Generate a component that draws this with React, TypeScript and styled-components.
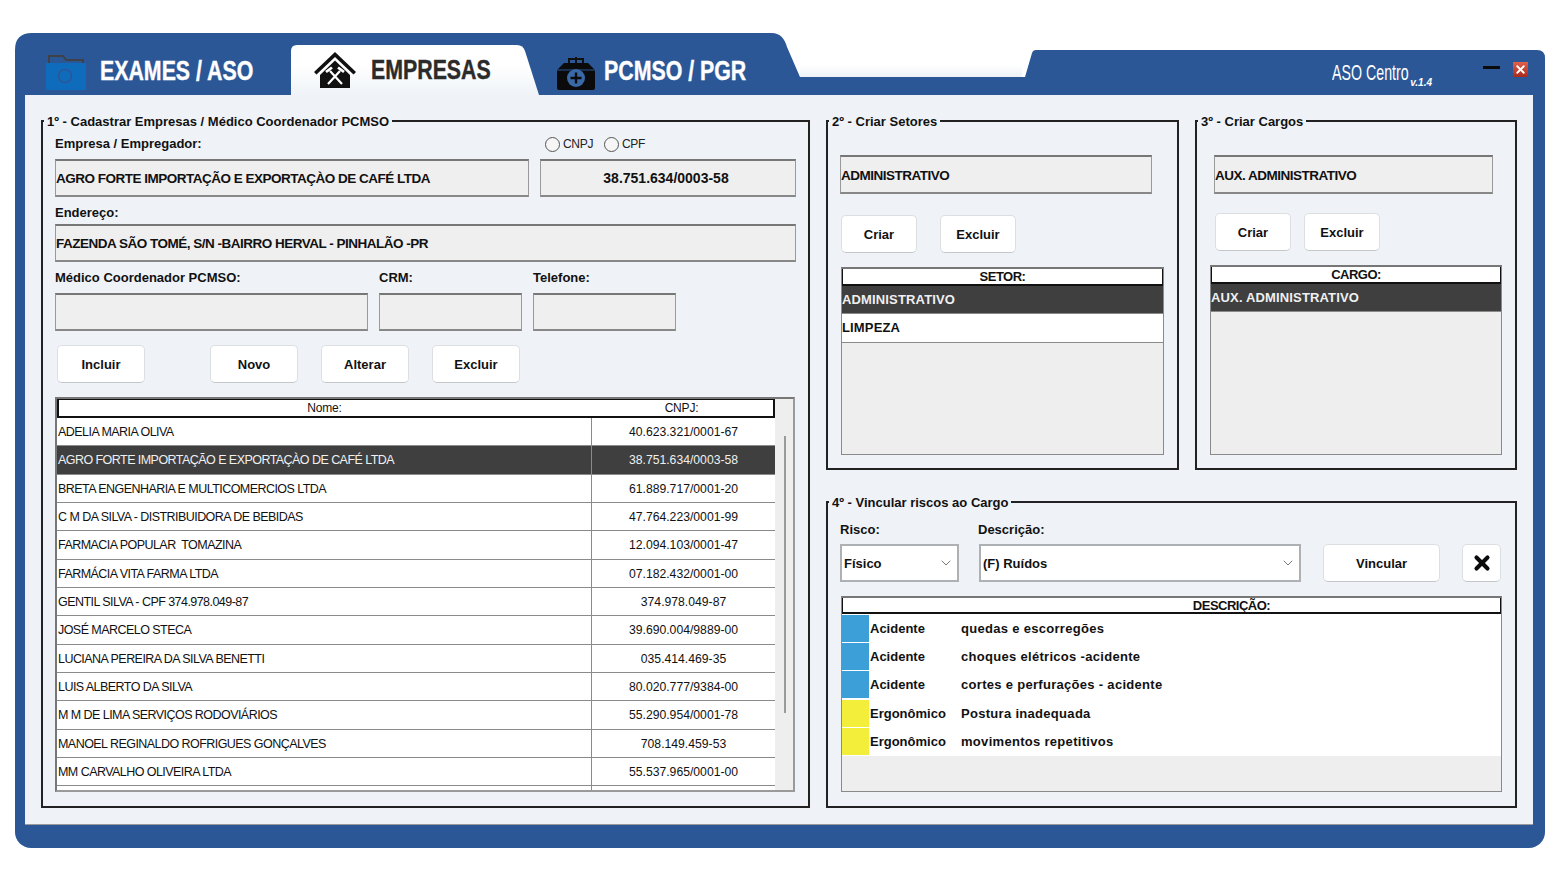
import styled, { createGlobalStyle } from 'styled-components';
import { ChevronDown, X } from 'lucide-react';

const EMPRESAS = [
  ['ADELIA MARIA OLIVA', '40.623.321/0001-67'],
  ['AGRO FORTE IMPORTAÇÃO E EXPORTAÇÀO DE CAFÉ LTDA', '38.751.634/0003-58'],
  ['BRETA ENGENHARIA E MULTICOMERCIOS LTDA', '61.889.717/0001-20'],
  ['C M DA SILVA - DISTRIBUIDORA DE BEBIDAS', '47.764.223/0001-99'],
  ['FARMACIA POPULAR  TOMAZINA', '12.094.103/0001-47'],
  ['FARMÁCIA VITA FARMA LTDA', '07.182.432/0001-00'],
  ['GENTIL SILVA - CPF 374.978.049-87', '374.978.049-87'],
  ['JOSÉ MARCELO STECA', '39.690.004/9889-00'],
  ['LUCIANA PEREIRA DA SILVA BENETTI', '035.414.469-35'],
  ['LUIS ALBERTO DA SILVA', '80.020.777/9384-00'],
  ['M M DE LIMA SERVIÇOS RODOVIÁRIOS', '55.290.954/0001-78'],
  ['MANOEL REGINALDO ROFRIGUES GONÇALVES', '708.149.459-53'],
  ['MM CARVALHO OLIVEIRA LTDA', '55.537.965/0001-00'],
  ['', ''],
];

const RISCOS = [
  ['#3d9fd8', 'Acidente', 'quedas e escorregões'],
  ['#3d9fd8', 'Acidente', 'choques elétricos -acidente'],
  ['#3d9fd8', 'Acidente', 'cortes e perfurações - acidente'],
  ['#f2ee3a', 'Ergonômico', 'Postura inadequada'],
  ['#f2ee3a', 'Ergonômico', 'movimentos repetitivos'],
];

function FolderIcon() {
  return (
    <svg width="40" height="36" viewBox="0 0 40 36">
      <path d="M3 9V2h14l3 4h17v3" fill="none" stroke="#3f4149" strokeWidth="2" />
      <rect x="0" y="9" width="40" height="27" rx="1" fill="#0f6cbd" />
      <circle cx="19" cy="22" r="6.5" fill="none" stroke="#2b5797" strokeWidth="1.6" />
    </svg>
  );
}

function HouseIcon() {
  return (
    <svg width="42" height="36" viewBox="0 0 42 36">
      <path d="M21 0L42 20l-2.500 2.500L21 5 2.500 22.500 0 20z" fill="#111" />
      <path d="M6 23L21 8.500 36 23v13H6z" fill="#111" />
      <path d="M14 32L26 19M28 32L16 19" stroke="#fff" strokeWidth="2.200" />
      <path d="M12 20L18 15.500M30 20L24 15.500" stroke="#fff" strokeWidth="2.800" />
    </svg>
  );
}

function CaseIcon() {
  return (
    <svg width="38" height="33" viewBox="0 0 38 33">
      <path d="M12 7V2h14v5" fill="none" stroke="#111" strokeWidth="2" />
      <path d="M19 0v7" stroke="#111" strokeWidth="2" />
      <path d="M7 6h24l7 7v18a2 2 0 0 1-2 2H2a2 2 0 0 1-2-2V13z" fill="#0b0b0b" />
      <path d="M0 13h38" stroke="#2b5797" strokeWidth="1" />
      <circle cx="19" cy="21" r="9" fill="#3a69a8" />
      <path d="M19 15.500v11M13.500 21h11" stroke="#0b0b0b" strokeWidth="2.400" />
    </svg>
  );
}

export default function App() {
  return (
    <>
      <GlobalStyle />
      <Window>
        <Header>
          <TabsBar>
            <TabIdle $width={245} $gap={14}>
              <FolderIcon />
              <TabLabel>EXAMES / ASO</TabLabel>
            </TabIdle>
            <TabActive>
              <HouseIcon />
              <TabLabel>EMPRESAS</TabLabel>
            </TabActive>
            <TabIdle $width={220} $gap={9}>
              <CaseIcon />
              <TabLabel>PCMSO / PGR</TabLabel>
            </TabIdle>
          </TabsBar>
          <Notch />
          <TitleBar>
            <AppTitle>ASO Centro</AppTitle>
            <AppVersion>v.1.4</AppVersion>
            <MinimizeButton />
            <CloseButton>
              <X size={13} strokeWidth={3.5} color="#fff" />
            </CloseButton>
          </TitleBar>
        </Header>

        <Frame>
          <Content>
            <Group>
              <legend>1º - Cadastrar Empresas / Médico Coordenador PCMSO</legend>
              <EmpresaForm>
                <TwoColumns>
                  <Label>Empresa / Empregador:</Label>
                  <RadioRow>
                    <Radio />
                    <RadioText>CNPJ</RadioText>
                    <Radio />
                    <RadioText>CPF</RadioText>
                  </RadioRow>
                </TwoColumns>
                <TwoColumns $top={7}>
                  <Field>AGRO FORTE IMPORTAÇÃO E EXPORTAÇÀO DE CAFÉ LTDA</Field>
                  <Field $center>38.751.634/0003-58</Field>
                </TwoColumns>
                <Label $top={8}>Endereço:</Label>
                <Field $top={3}>FAZENDA SÃO TOMÉ, S/N -BAIRRO HERVAL - PINHALÃO -PR</Field>
                <ThreeColumns $top={8}>
                  <Label>Médico Coordenador PCMSO:</Label>
                  <Label>CRM:</Label>
                  <Label>Telefone:</Label>
                </ThreeColumns>
                <ThreeColumns $top={7}>
                  <Field />
                  <Field />
                  <Field />
                </ThreeColumns>
                <FormButtons>
                  <IncluirButton>Incluir</IncluirButton>
                  <Button>Novo</Button>
                  <Button>Alterar</Button>
                  <Button>Excluir</Button>
                </FormButtons>
                <CompanyList>
                  <CompanyTable>
                    <CompanyHead>
                      <span>Nome:</span>
                      <span>CNPJ:</span>
                    </CompanyHead>
                    {EMPRESAS.map(([nome, cnpj], i) => (
                      <CompanyRow key={i} $selected={i === 1}>
                        <NameCell>{nome}</NameCell>
                        <CnpjCell>{cnpj}</CnpjCell>
                      </CompanyRow>
                    ))}
                  </CompanyTable>
                  <ScrollTrack>
                    <ScrollThumb />
                  </ScrollTrack>
                </CompanyList>
              </EmpresaForm>
            </Group>

            <RightColumn>
              <TopGroups>
                <Group>
                  <legend>2º - Criar Setores</legend>
                  <SetorPane>
                    <Field $width={312}>ADMINISTRATIVO</Field>
                    <SmallButtons $top={21} $left={1} $gap={23}>
                      <SmallButton>Criar</SmallButton>
                      <SmallButton>Excluir</SmallButton>
                    </SmallButtons>
                    <SmallList $width={323} $height={188} $left={1}>
                      <SmallListHead>SETOR:</SmallListHead>
                      <SmallRow $selected>ADMINISTRATIVO</SmallRow>
                      <SmallRow>LIMPEZA</SmallRow>
                    </SmallList>
                  </SetorPane>
                </Group>
                <Group>
                  <legend>3º - Criar Cargos</legend>
                  <CargoPane>
                    <Field $width={279} $left={4}>AUX. ADMINISTRATIVO</Field>
                    <SmallButtons $top={19} $left={5} $gap={13}>
                      <SmallButton>Criar</SmallButton>
                      <SmallButton>Excluir</SmallButton>
                    </SmallButtons>
                    <SmallList $width={292} $height={190}>
                      <SmallListHead>CARGO:</SmallListHead>
                      <SmallRow $selected>AUX. ADMINISTRATIVO</SmallRow>
                    </SmallList>
                  </CargoPane>
                </Group>
              </TopGroups>

              <RiscoGroup>
                <legend>4º - Vincular riscos ao Cargo</legend>
                <RiscoPane>
                  <RiscoLabels>
                    <Label>Risco:</Label>
                    <Label>Descrição:</Label>
                  </RiscoLabels>
                  <RiscoControls>
                    <Select>
                      Físico
                      <ChevronDown size={16} strokeWidth={1.2} color="#555" />
                    </Select>
                    <Select>
                      (F) Ruídos
                      <ChevronDown size={16} strokeWidth={1.2} color="#555" />
                    </Select>
                    <VincularButton>Vincular</VincularButton>
                    <RemoveButton>
                      <X size={22} strokeWidth={4.5} color="#0b0b0b" />
                    </RemoveButton>
                  </RiscoControls>
                  <SmallList $width={661} $height={196} $left={1} $top={14}>
                    <SmallListHead $offset={120}>DESCRIÇÃO:</SmallListHead>
                    {RISCOS.map(([cor, tipo, texto]) => (
                      <RiscoRow key={texto}>
                        <Swatch $color={cor} />
                        <RiscoTipo>{tipo}</RiscoTipo>
                        <RiscoTexto>{texto}</RiscoTexto>
                      </RiscoRow>
                    ))}
                  </SmallList>
                </RiscoPane>
              </RiscoGroup>
            </RightColumn>
          </Content>
        </Frame>
      </Window>
    </>
  );
}

const GlobalStyle = createGlobalStyle`
  html, body {
    margin: 0;
    background: #fff;
  }
  * {
    box-sizing: border-box;
  }
  body {
    font-family: "Liberation Sans", Arial, sans-serif;
    color: #111;
    overflow: hidden;
  }
`;

const Window = styled.div`
  width: 1530px;
  margin: 33px 0 0 15px;
`;

const Header = styled.header`
  height: 62px;
  display: flex;
  align-items: flex-end;
`;

const TabsBar = styled.nav`
  width: 785px;
  height: 62px;
  padding-left: 31px;
  display: flex;
  align-items: flex-end;
  background: #2b5797;
  clip-path: path('M0 62 L0 17 Q0 0 17 0 L757 0 Q768 0 772 14 L785 44 L785 62 Z');
`;

const TabLabel = styled.span`
  font-size: 27px;
  font-weight: 700;
  white-space: nowrap;
  -webkit-text-stroke: 0.4px currentColor;
  transform: scaleX(0.79);
  transform-origin: left center;
`;

const TabIdle = styled.div<{ $width: number; $gap: number }>`
  width: ${(p) => p.$width}px;
  height: 50px;
  padding-bottom: 5px;
  display: flex;
  align-items: flex-end;
  gap: ${(p) => p.$gap}px;
  color: #fff;

  & > svg {
    flex: none;
  }
  & > span {
    align-self: center;
    margin-top: 8px;
  }
`;

const TabActive = styled.div`
  width: 248px;
  height: 50px;
  margin-right: 18px;
  padding: 8px 0 7px 23px;
  display: flex;
  align-items: flex-end;
  gap: 15px;
  color: #2b2b2b;
  background: linear-gradient(#fff 40%, #eff3f7);
  clip-path: path('M0 50 L0 6 Q0 0 6 0 L226 0 Q232 0 234 6 L248 50 Z');

  & > span {
    align-self: center;
  }
`;

const Notch = styled.div`
  flex: 1;
  height: 30px;
  background: linear-gradient(#fff 0, #eef2f6 12px, #2b5797 12px);
`;

const TitleBar = styled.div`
  width: 523px;
  height: 45px;
  padding: 12px 17px 0 0;
  display: flex;
  align-items: flex-start;
  background: #2b5797;
  clip-path: path('M0 45 L0 27 L3 27 L10 3 Q11 0 14 0 L515 0 Q523 0 523 8 L523 45 Z');
`;

const AppTitle = styled.span`
  margin-left: auto;
  margin-top: -1px;
  font-size: 22px;
  line-height: 24px;
  color: #fff;
  white-space: nowrap;
  transform: scaleX(0.645);
  transform-origin: right center;
`;

const AppVersion = styled.span`
  margin: 15px 51px 0 2px;
  font-size: 10px;
  line-height: 11px;
  font-weight: 700;
  font-style: italic;
  color: #fff;
`;

const MinimizeButton = styled.div`
  width: 17px;
  height: 3px;
  margin-top: 4px;
  background: #0b0b0b;
`;

const CloseButton = styled.div`
  width: 15px;
  height: 15px;
  margin-left: 13px;
  display: flex;
  align-items: center;
  justify-content: center;
  background: linear-gradient(#e2604a, #a82a1c);
`;

const Frame = styled.div`
  padding: 0 12px 23px 10px;
  background: #2b5797;
  border-radius: 0 0 16px 16px;
`;

const Content = styled.main`
  height: 730px;
  padding: 18px 16px 17px 16px;
  display: grid;
  grid-template-columns: 769px 691px;
  column-gap: 16px;
  background: #eff3f7;
  border-bottom: 1px solid #999;
`;

const Group = styled.fieldset`
  margin: 0;
  padding: 0;
  min-width: 0;
  border: 2px solid #222;

  & > legend {
    height: 16px;
    margin-left: 1px;
    padding: 0 3px;
    font-size: 13px;
    line-height: 18px;
    font-weight: 700;
    white-space: nowrap;
  }
`;

const RiscoGroup = styled(Group)`
  flex: 1;
`;

const EmpresaForm = styled.div`
  padding: 7px 12px 14px 12px;
  display: flex;
  flex-direction: column;
`;

const TwoColumns = styled.div<{ $top?: number }>`
  margin-top: ${(p) => p.$top ?? 0}px;
  display: grid;
  grid-template-columns: 474px 256px;
  column-gap: 11px;
`;

const ThreeColumns = styled.div<{ $top?: number }>`
  margin-top: ${(p) => p.$top ?? 0}px;
  display: grid;
  grid-template-columns: 313px 143px 143px;
  column-gap: 11px;
`;

const Label = styled.label<{ $top?: number }>`
  height: 16px;
  margin-top: ${(p) => p.$top ?? 0}px;
  font-size: 13px;
  line-height: 16px;
  font-weight: 700;
`;

const RadioRow = styled.div`
  padding-left: 5px;
  display: flex;
  align-items: center;
`;

const Radio = styled.span`
  width: 15px;
  height: 15px;
  margin-right: 3px;
  border: 1px solid #555;
  border-radius: 50%;
  background: #f6f6f6;
`;

const RadioText = styled.span`
  width: 41px;
  font-size: 12px;
  letter-spacing: -0.3px;
  color: #222;
`;

const Field = styled.div<{ $center?: boolean; $top?: number; $left?: number; $width?: number }>`
  width: ${(p) => (p.$width ? `${p.$width}px` : 'auto')};
  height: ${(p) => (p.$width ? 39 : 38)}px;
  margin-top: ${(p) => p.$top ?? 0}px;
  margin-left: ${(p) => p.$left ?? 0}px;
  padding-top: ${(p) => (p.$width ? 2 : 0)}px;
  padding-right: ${(p) => (p.$center ? 4 : 0)}px;
  display: flex;
  align-items: center;
  justify-content: ${(p) => (p.$center ? 'center' : 'flex-start')};
  font-size: ${(p) => (p.$center ? 14 : 13.5)}px;
  font-weight: 700;
  letter-spacing: ${(p) => (p.$center ? 0 : -0.5)}px;
  white-space: nowrap;
  background: #efefef;
  border: 1px solid #999;
  border-top: 2px solid #777;
  border-bottom: 2px solid #888;
`;

const Button = styled.button`
  height: 38px;
  width: 88px;
  padding: 0;
  font-family: inherit;
  font-size: 13px;
  font-weight: 700;
  color: #111;
  background: #fff;
  border: 1px solid #dcdfe2;
  border-bottom-color: #c4c7ca;
  border-radius: 5px;
`;

const IncluirButton = styled(Button)`
  margin-right: 42px;
`;

const FormButtons = styled.div`
  margin: 14px 0 14px 2px;
  display: flex;
  gap: 23px;
`;

const CompanyList = styled.div`
  width: 740px;
  height: 395px;
  display: flex;
  overflow: hidden;
  background: #eeeeee;
  border: 2px solid #9a9a9a;
  border-left-color: #777;
  border-top-color: #777;
`;

const CompanyTable = styled.div`
  width: 718px;
  flex: none;
`;

const CompanyHead = styled.div`
  height: 20px;
  margin-top: -1px;
  display: grid;
  grid-template-columns: 531px 1fr;
  align-items: center;
  text-align: center;
  font-size: 12px;
  letter-spacing: -0.2px;
  background: #fff;
  border: 2px solid #111;
`;

const CompanyRow = styled.div<{ $selected?: boolean }>`
  height: 28.33px;
  display: grid;
  grid-template-columns: 535px 1fr;
  align-items: stretch;
  font-size: 12.5px;
  letter-spacing: -0.55px;
  white-space: pre;
  color: ${(p) => (p.$selected ? '#f0f0f0' : '#111')};
  background: ${(p) => (p.$selected ? '#3f3f3f' : '#fff')};
  border-bottom: 1px solid #8a8a8a;
`;

const NameCell = styled.div`
  padding: 1px 0 0 1px;
  display: flex;
  align-items: center;
  border-right: 1px solid #8a8a8a;
`;

const CnpjCell = styled.div`
  padding-top: 1px;
  display: flex;
  align-items: center;
  justify-content: center;
  font-size: 12.2px;
  letter-spacing: 0;
`;

const ScrollTrack = styled.div`
  flex: 1;
  padding: 37px 0 0 9px;
`;

const ScrollThumb = styled.div`
  width: 2px;
  height: 277px;
  background: #9a9a9a;
`;

const RightColumn = styled.div`
  display: flex;
  flex-direction: column;
  gap: 24px;
  min-width: 0;
`;

const TopGroups = styled.div`
  height: 357px;
  display: grid;
  grid-template-columns: 353px 322px;
  column-gap: 16px;
`;

const SetorPane = styled.div`
  padding: 26px 0 0 12px;
`;

const CargoPane = styled.div`
  padding: 26px 0 0 13px;
`;

const SmallButtons = styled.div<{ $top: number; $left: number; $gap: number }>`
  margin: ${(p) => p.$top}px 0 14px ${(p) => p.$left}px;
  display: flex;
  gap: ${(p) => p.$gap}px;
`;

const SmallButton = styled(Button)`
  width: 76px;
`;

const SmallList = styled.div<{ $width: number; $height: number; $left?: number; $top?: number }>`
  width: ${(p) => p.$width}px;
  height: ${(p) => p.$height}px;
  margin-top: ${(p) => p.$top ?? 0}px;
  margin-left: ${(p) => p.$left ?? 0}px;
  overflow: hidden;
  background: #eeeeee;
  border: 1px solid #8a8a8a;
  border-top: 2px solid #777;
`;

const SmallListHead = styled.div<{ $offset?: number }>`
  height: ${(p) => (p.$offset ? 18 : 19)}px;
  margin: -2px -1px 0;
  padding-left: ${(p) => p.$offset ?? 0}px;
  display: flex;
  align-items: center;
  justify-content: center;
  font-size: 13px;
  font-weight: 700;
  letter-spacing: -0.5px;
  background: #fff;
  border: 2px solid #111;
`;

const SmallRow = styled.div<{ $selected?: boolean }>`
  height: 28.33px;
  display: flex;
  align-items: center;
  font-size: 13px;
  font-weight: 700;
  letter-spacing: 0.15px;
  color: ${(p) => (p.$selected ? '#f0f0f0' : '#111')};
  background: ${(p) => (p.$selected ? '#3f3f3f' : '#fff')};
  border-bottom: 1px solid #8a8a8a;
`;

const RiscoPane = styled.div`
  padding: 12px 0 0 12px;
`;

const RiscoLabels = styled.div`
  display: grid;
  grid-template-columns: 138px 1fr;
`;

const RiscoControls = styled.div`
  margin-top: 6px;
  display: grid;
  grid-template-columns: 119px 322px 119px 41px;
  column-gap: 20px;
`;

const Select = styled.div`
  height: 38px;
  padding: 0 3px 0 2px;
  display: flex;
  align-items: center;
  justify-content: space-between;
  font-size: 13px;
  font-weight: 700;
  background: #fff;
  border: 2px solid #aeb1b4;
`;

const VincularButton = styled(Button)`
  width: 117px;
  justify-self: end;
`;

const RemoveButton = styled(Button)`
  width: 39px;
  justify-self: end;
  display: flex;
  align-items: center;
  justify-content: center;
`;

const RiscoRow = styled.div`
  height: 28.33px;
  display: flex;
  align-items: center;
  font-size: 13px;
  font-weight: 700;
  background: #fff;
`;

const Swatch = styled.span<{ $color: string }>`
  width: 27px;
  height: 27px;
  flex: none;
  background: ${(p) => p.$color};
`;

const RiscoTipo = styled.span`
  width: 92px;
  padding-left: 1px;
  flex: none;
`;

const RiscoTexto = styled.span`
  letter-spacing: 0.3px;
`;
